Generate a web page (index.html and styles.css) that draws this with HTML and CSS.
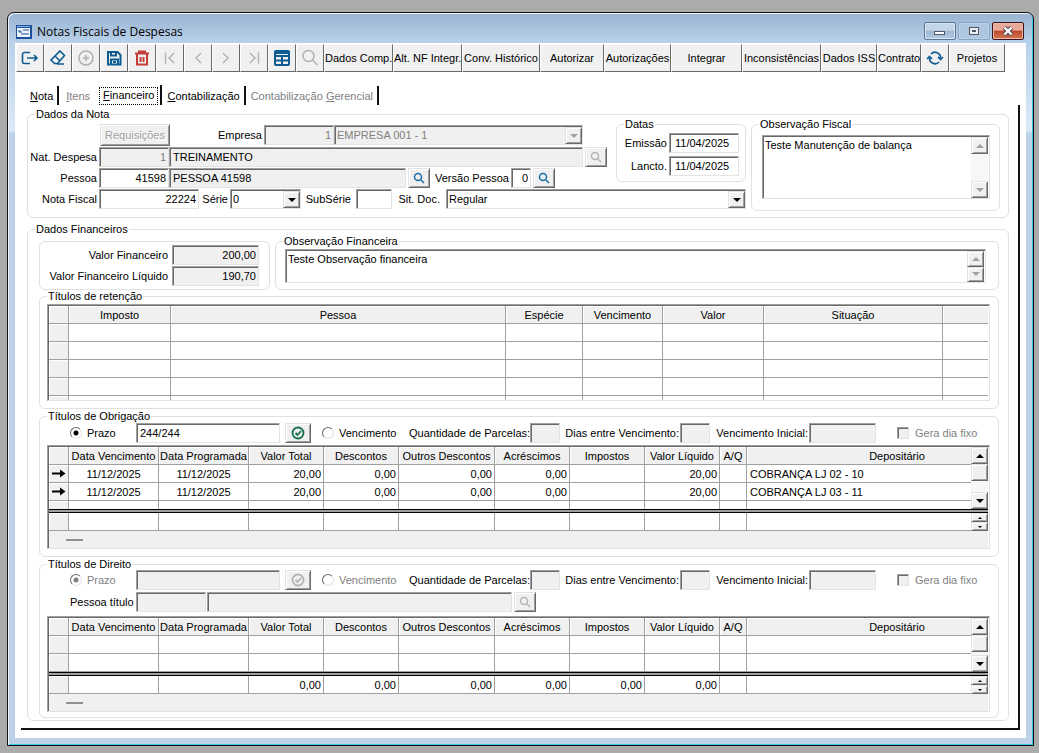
FILE: index.html
```html
<!DOCTYPE html>
<html lang="pt-BR">
<head>
  <meta charset="UTF-8">
  <meta name="viewport" content="width=device-width, initial-scale=1.0">
  <title>Notas Fiscais de Despesas</title>
  <link rel="stylesheet" href="styles.css">
</head>
<body>
  <div class="window">
    <header class="titlebar">
      <svg class="logo" width="16" height="14" viewBox="0 0 16 14">
        <rect width="16" height="14" fill="#1d4f9c"/>
        <rect x="1" y="3" width="13" height="9" fill="#eef5fc"/>
        <path d="M2 6h3M7 5h6M3 7h3M5 9h8" stroke="#1d4f9c" fill="none"/>
        <path d="M1 1.5h13" stroke="#7fb2e6"/>
      </svg>
      <h1>Notas Fiscais de Despesas</h1>
      <div class="win-buttons">
        <button type="button" class="win-btn" aria-label="Minimizar">
          <svg width="12" height="10" viewBox="0 0 12 10"><rect x="0.5" y="5.5" width="10" height="3" fill="#fff" stroke="#535666"/></svg>
        </button>
        <button type="button" class="win-btn faded" aria-label="Maximizar">
          <svg width="12" height="10" viewBox="0 0 12 10"><rect x="1.5" y="1.5" width="9" height="7" fill="#e8eef6" stroke="#535666"/><rect x="4.5" y="4.5" width="3" height="1" fill="#fff" stroke="#535666"/></svg>
        </button>
        <button type="button" class="win-btn close" aria-label="Fechar">
          <svg width="12" height="10" viewBox="0 0 12 10"><path d="M2.5 1.5l7 7M9.5 1.5l-7 7" stroke="#4b4b5a" stroke-width="4.5"/><path d="M2.5 1.5l7 7M9.5 1.5l-7 7" stroke="#fff" stroke-width="2.4"/></svg>
        </button>
      </div>
    </header>

    <div class="toolbar">
      <button type="button" class="tool icon" aria-label="Sair">
        <svg viewBox="0 0 18 18"><path d="M9 3.5H3.500a2 2 0 0 0-2 2v7a2 2 0 0 0 2 2H9M6 9h10M13 6l3 3-3 3"/></svg>
      </button>
      <button type="button" class="tool icon" aria-label="Limpar">
        <svg viewBox="0 0 18 18"><path d="M11 2l4.500 4.500-7 8H5.500L2 11zM6 7l5 5M8 15h7"/></svg>
      </button>
      <button type="button" class="tool icon off" aria-label="Adicionar">
        <svg viewBox="0 0 18 18"><circle cx="9" cy="9" r="7"/><path d="M9 6v6M6 9h6"/></svg>
      </button>
      <button type="button" class="tool icon bold" aria-label="Salvar">
        <svg viewBox="0 0 18 18"><path d="M3 3h9.500L15.500 6v9.500H3zM6 3v3.500h5V3M6 15.500v-5h7v5M8 13h3"/></svg>
      </button>
      <button type="button" class="tool icon red bold" aria-label="Excluir">
        <svg viewBox="0 0 18 18"><path d="M2 4.500h14M6 4.500v-2h6v2M4 4.500v11h10v-11M7.500 8v5M10.500 8v5"/></svg>
      </button>
      <button type="button" class="tool icon off thin" aria-label="Primeiro">
        <svg viewBox="0 0 18 18"><path d="M4.500 3.500v11M13 4L8 9l5 5"/></svg>
      </button>
      <button type="button" class="tool icon off thin" aria-label="Anterior">
        <svg viewBox="0 0 18 18"><path d="M12 4L7 9l5 5"/></svg>
      </button>
      <button type="button" class="tool icon off thin" aria-label="Próximo">
        <svg viewBox="0 0 18 18"><path d="M6 4l5 5-5 5"/></svg>
      </button>
      <button type="button" class="tool icon off thin" aria-label="Último">
        <svg viewBox="0 0 18 18"><path d="M5 4l5 5-5 5M13.500 3.500v11"/></svg>
      </button>
      <button type="button" class="tool icon bold" aria-label="Grade">
        <svg viewBox="0 0 18 18"><rect x="2" y="2" width="14" height="14" rx="1"/><path d="M2 4h14M2 7h14M2 11.500h14M9 7v9"/></svg>
      </button>
      <button type="button" class="tool icon off thin" aria-label="Pesquisar">
        <svg viewBox="0 0 18 18"><circle cx="7.500" cy="7" r="5.500"/><path d="M11.500 11l5 5"/></svg>
      </button>
      <button type="button" class="tool w-69">Dados Comp.</button>
      <button type="button" class="tool w-69">Alt. NF Integr.</button>
      <button type="button" class="tool w-78">Conv. Histórico</button>
      <button type="button" class="tool w-64">Autorizar</button>
      <button type="button" class="tool w-67">Autorizações</button>
      <button type="button" class="tool w-71">Integrar</button>
      <button type="button" class="tool w-79">Inconsistências</button>
      <button type="button" class="tool w-56">Dados ISS</button>
      <button type="button" class="tool w-44">Contrato</button>
      <button type="button" class="tool icon" aria-label="Atualizar">
        <svg viewBox="0 0 18 18"><path d="M5 5a5.500 5.500 0 0 1 9.500 4M13 13a5.500 5.500 0 0 1-9.500-4M12 8l2.500 2.500L17 8M1 10l2.500-2.500L6 10"/></svg>
      </button>
      <button type="button" class="tool w-56">Projetos</button>
    </div>

    <div class="tabs" role="tablist">
      <button type="button" class="tab" role="tab"><u>N</u>ota</button>
      <button type="button" class="tab off plain" role="tab"><u>I</u>tens</button>
      <button type="button" class="tab active" role="tab" aria-selected="true"><span><u>F</u>inanceiro</span></button>
      <button type="button" class="tab" role="tab"><u>C</u>ontabilização</button>
      <button type="button" class="tab off" role="tab">Contabilização <u>G</u>erencial</button>
    </div>

    <main class="panel">
      <fieldset class="box nota">
        <legend>Dados da Nota</legend>
        <div class="nota-body">
          <div class="nota-form">
            <div class="nota-top">
              <div class="nota-rows">
                <div class="row row-empresa">
                  <button type="button" class="btn btn-req" disabled>Requisições</button>
                  <label class="lbl lbl-empresa" for="empresa">Empresa</label>
                  <input class="field num w-code off" id="empresa" value="1" disabled>
                  <div class="combo grow off">
                    <select aria-label="Nome da empresa" disabled><option>EMPRESA 001 - 1</option></select>
                    <span class="combo-arrow"></span>
                  </div>
                </div>
                <div class="row">
                  <label class="lbl lbl-first" for="natureza">Nat. Despesa</label>
                  <input class="field num w-code off" id="natureza" value="1" disabled>
                  <input class="field grow lock" aria-label="Natureza" value="TREINAMENTO" readonly>
                  <button type="button" class="btn btn-find off" aria-label="Pesquisar natureza" disabled>
                    <svg viewBox="0 0 12 12"><circle cx="5" cy="5" r="3.500"/><path d="M8 8l3 3"/></svg>
                  </button>
                </div>
                <div class="row">
                  <label class="lbl lbl-first" for="pessoa">Pessoa</label>
                  <input class="field num w-code" id="pessoa" value="41598">
                  <input class="field grow lock" aria-label="Nome da pessoa" value="PESSOA 41598" readonly>
                  <button type="button" class="btn btn-find" aria-label="Pesquisar pessoa">
                    <svg viewBox="0 0 12 12"><circle cx="5" cy="5" r="3.500"/><path d="M8 8l3 3"/></svg>
                  </button>
                  <label class="lbl lbl-versao" for="versao">Versão Pessoa</label>
                  <input class="field num w-versao" id="versao" value="0">
                  <button type="button" class="btn btn-find end-versao" aria-label="Pesquisar versão">
                    <svg viewBox="0 0 12 12"><circle cx="5" cy="5" r="3.500"/><path d="M8 8l3 3"/></svg>
                  </button>
                </div>
              </div>
              <fieldset class="box datas">
                <legend>Datas</legend>
                <div class="row">
                  <label class="lbl" for="emissao">Emissão</label>
                  <input class="field date" id="emissao" value="11/04/2025">
                </div>
                <div class="row">
                  <label class="lbl" for="lancto">Lancto.</label>
                  <input class="field date" id="lancto" value="11/04/2025">
                </div>
              </fieldset>
            </div>
            <div class="row">
              <label class="lbl lbl-first" for="nf">Nota Fiscal</label>
              <input class="field num w-nf" id="nf" value="22224">
              <label class="lbl lbl-serie" for="serie">Série</label>
              <div class="combo w-serie">
                <select id="serie"><option>0</option></select>
                <span class="combo-arrow"></span>
              </div>
              <label class="lbl lbl-sub" for="subserie">SubSérie</label>
              <input class="field w-sub" id="subserie">
              <label class="lbl lbl-sit" for="sitdoc">Sit. Doc.</label>
              <div class="combo grow">
                <select id="sitdoc"><option>Regular</option></select>
                <span class="combo-arrow"></span>
              </div>
            </div>
          </div>
          <fieldset class="box obs-fiscal">
            <legend>Observação Fiscal</legend>
            <div class="memo">
              <textarea aria-label="Observação Fiscal">Teste Manutenção de balança</textarea>
              <div class="scroll off">
                <button type="button" class="sbtn up" aria-label="Subir"></button>
                <button type="button" class="sbtn down" aria-label="Descer"></button>
              </div>
            </div>
          </fieldset>
        </div>
      </fieldset>

      <fieldset class="box financeiros">
        <legend>Dados Financeiros</legend>
        <div class="fin-top">
          <div class="box valores">
            <div class="row">
              <label class="lbl" for="valor">Valor Financeiro</label>
              <input class="field num lock" id="valor" value="200,00" readonly>
            </div>
            <div class="row">
              <label class="lbl" for="liquido">Valor Financeiro Líquido</label>
              <input class="field num lock" id="liquido" value="190,70" readonly>
            </div>
          </div>
          <fieldset class="box obs-fin">
            <legend>Observação Financeira</legend>
            <div class="memo">
              <textarea aria-label="Observação Financeira">Teste Observação financeira</textarea>
              <div class="scroll off">
                <button type="button" class="sbtn up" aria-label="Subir"></button>
                <button type="button" class="sbtn down" aria-label="Descer"></button>
              </div>
            </div>
          </fieldset>
        </div>

        <fieldset class="box titulos retencao">
          <legend>Títulos de retenção</legend>
          <div class="grid">
            <table>
              <colgroup>
                <col class="c-mark"><col class="c-imposto"><col><col class="c-especie"><col class="c-venc"><col class="c-valor"><col class="c-sit"><col class="c-rest">
              </colgroup>
              <thead>
                <tr><th></th><th>Imposto</th><th>Pessoa</th><th>Espécie</th><th>Vencimento</th><th>Valor</th><th>Situação</th><th></th></tr>
              </thead>
              <tbody>
                <tr><td></td><td></td><td></td><td></td><td></td><td></td><td></td><td></td></tr>
                <tr><td></td><td></td><td></td><td></td><td></td><td></td><td></td><td></td></tr>
                <tr><td></td><td></td><td></td><td></td><td></td><td></td><td></td><td></td></tr>
                <tr><td></td><td></td><td></td><td></td><td></td><td></td><td></td><td></td></tr>
                <tr class="cut"><td></td><td></td><td></td><td></td><td></td><td></td><td></td><td></td></tr>
              </tbody>
            </table>
          </div>
        </fieldset>

        <fieldset class="box titulos obrigacao">
          <legend>Títulos de Obrigação</legend>
          <div class="row opts">
            <label class="radio prazo"><input type="radio" name="obr" checked>Prazo</label>
            <input class="field w-prazo" aria-label="Prazo" value="244/244">
            <button type="button" class="btn btn-ok" aria-label="Confirmar prazo">
              <svg viewBox="0 0 14 14"><circle cx="7" cy="7" r="5.500"/><path d="M4.500 7l2 2 3.500-4"/></svg>
            </button>
            <label class="radio venc"><input type="radio" name="obr">Vencimento</label>
            <label class="lbl lbl-qtd" for="qtd1">Quantidade de Parcelas:</label>
            <input class="field w-30 off" id="qtd1" disabled>
            <label class="lbl lbl-dias" for="dias1">Dias entre Vencimento:</label>
            <input class="field w-30 off" id="dias1" disabled>
            <label class="lbl lbl-ini" for="ini1">Vencimento Inicial:</label>
            <input class="field w-67 off" id="ini1" disabled>
            <label class="check"><input type="checkbox" disabled>Gera dia fixo</label>
          </div>
          <div class="grid">
            <div class="grid-part">
              <table>
                <colgroup>
                  <col class="c-mark"><col class="c-data"><col class="c-data"><col class="c-75"><col class="c-75"><col class="c-outros"><col class="c-75"><col class="c-75"><col class="c-75"><col class="c-aq"><col>
                </colgroup>
                <thead>
                  <tr><th></th><th>Data Vencimento</th><th>Data Programada</th><th>Valor Total</th><th>Descontos</th><th>Outros Descontos</th><th>Acréscimos</th><th>Impostos</th><th>Valor Líquido</th><th>A/Q</th><th class="dep">Depositário</th></tr>
                </thead>
                <tbody>
                  <tr>
                    <td><svg class="arrow" width="14" height="9" viewBox="0 0 14 9"><path d="M0 4.500h11" stroke="#000" stroke-width="2"/><path d="M8 0.500l5.500 4-5.500 4z"/></svg></td>
                    <td class="mid">11/12/2025</td><td class="mid">11/12/2025</td><td>20,00</td><td>0,00</td><td>0,00</td><td>0,00</td><td></td><td>20,00</td><td></td><td class="txt">COBRANÇA LJ 02 - 10</td>
                  </tr>
                  <tr>
                    <td><svg class="arrow" width="14" height="9" viewBox="0 0 14 9"><path d="M0 4.500h11" stroke="#000" stroke-width="2"/><path d="M8 0.500l5.500 4-5.500 4z"/></svg></td>
                    <td class="mid">11/12/2025</td><td class="mid">11/12/2025</td><td>20,00</td><td>0,00</td><td>0,00</td><td>0,00</td><td></td><td>20,00</td><td></td><td class="txt">COBRANÇA LJ 03 - 11</td>
                  </tr>
                  <tr class="cut"><td></td><td></td><td></td><td></td><td></td><td></td><td></td><td></td><td></td><td></td><td></td></tr>
                </tbody>
              </table>
              <div class="scroll">
                <button type="button" class="sbtn up" aria-label="Subir"></button>
                <span class="thumb"></span>
                <button type="button" class="sbtn down" aria-label="Descer"></button>
              </div>
            </div>
            <div class="split"></div>
            <div class="grid-part">
              <table>
                <colgroup>
                  <col class="c-mark"><col class="c-data"><col class="c-data"><col class="c-75"><col class="c-75"><col class="c-outros"><col class="c-75"><col class="c-75"><col class="c-75"><col class="c-aq"><col>
                </colgroup>
                <tbody>
                  <tr><td></td><td></td><td></td><td></td><td></td><td></td><td></td><td></td><td></td><td></td><td></td></tr>
                </tbody>
              </table>
              <div class="scroll mini">
                <button type="button" class="sbtn up" aria-label="Subir"></button>
                <button type="button" class="sbtn down" aria-label="Descer"></button>
              </div>
            </div>
            <div class="grid-foot"><span class="dash"></span></div>
          </div>
        </fieldset>

        <fieldset class="box titulos direito">
          <legend>Títulos de Direito</legend>
          <div class="row opts">
            <label class="radio prazo off"><input type="radio" name="dir" checked disabled>Prazo</label>
            <input class="field w-prazo off" aria-label="Prazo" disabled>
            <button type="button" class="btn btn-ok off" aria-label="Confirmar prazo" disabled>
              <svg viewBox="0 0 14 14"><circle cx="7" cy="7" r="5.500"/><path d="M4.500 7l2 2 3.500-4"/></svg>
            </button>
            <label class="radio venc off"><input type="radio" name="dir" disabled>Vencimento</label>
            <label class="lbl lbl-qtd" for="qtd2">Quantidade de Parcelas:</label>
            <input class="field w-30 off" id="qtd2" disabled>
            <label class="lbl lbl-dias" for="dias2">Dias entre Vencimento:</label>
            <input class="field w-30 off" id="dias2" disabled>
            <label class="lbl lbl-ini" for="ini2">Vencimento Inicial:</label>
            <input class="field w-67 off" id="ini2" disabled>
            <label class="check"><input type="checkbox" disabled>Gera dia fixo</label>
          </div>
          <div class="row opts">
            <label class="lbl-titulo" for="ptitulo">Pessoa título</label>
            <input class="field w-code off" id="ptitulo" disabled>
            <input class="field w-titulo off" aria-label="Nome da pessoa do título" disabled>
            <button type="button" class="btn btn-find off" aria-label="Pesquisar pessoa do título" disabled>
              <svg viewBox="0 0 12 12"><circle cx="5" cy="5" r="3.500"/><path d="M8 8l3 3"/></svg>
            </button>
          </div>
          <div class="grid">
            <div class="grid-part">
              <table>
                <colgroup>
                  <col class="c-mark"><col class="c-data"><col class="c-data"><col class="c-75"><col class="c-75"><col class="c-outros"><col class="c-75"><col class="c-75"><col class="c-75"><col class="c-aq"><col>
                </colgroup>
                <thead>
                  <tr><th></th><th>Data Vencimento</th><th>Data Programada</th><th>Valor Total</th><th>Descontos</th><th>Outros Descontos</th><th>Acréscimos</th><th>Impostos</th><th>Valor Líquido</th><th>A/Q</th><th class="dep">Depositário</th></tr>
                </thead>
                <tbody>
                  <tr><td></td><td></td><td></td><td></td><td></td><td></td><td></td><td></td><td></td><td></td><td></td></tr>
                  <tr><td></td><td></td><td></td><td></td><td></td><td></td><td></td><td></td><td></td><td></td><td></td></tr>
                </tbody>
              </table>
              <div class="scroll">
                <button type="button" class="sbtn up" aria-label="Subir"></button>
                <span class="thumb"></span>
                <button type="button" class="sbtn down" aria-label="Descer"></button>
              </div>
            </div>
            <div class="split"></div>
            <div class="grid-part">
              <table>
                <colgroup>
                  <col class="c-mark"><col class="c-data"><col class="c-data"><col class="c-75"><col class="c-75"><col class="c-outros"><col class="c-75"><col class="c-75"><col class="c-75"><col class="c-aq"><col>
                </colgroup>
                <tbody>
                  <tr><td></td><td></td><td></td><td>0,00</td><td>0,00</td><td>0,00</td><td>0,00</td><td>0,00</td><td>0,00</td><td></td><td></td></tr>
                </tbody>
              </table>
              <div class="scroll mini">
                <button type="button" class="sbtn up" aria-label="Subir"></button>
                <button type="button" class="sbtn down" aria-label="Descer"></button>
              </div>
            </div>
            <div class="grid-foot"><span class="dash"></span></div>
          </div>
        </fieldset>
      </fieldset>
    </main>
  </div>
</body>
</html>
```
FILE: styles.css
```css
* {
  box-sizing: border-box;
}

body {
  margin: 0;
  padding: 12px 5px 6px 7px;
  background: #ababab;
  color: #000;
  font: 11px/14px "Liberation Sans", Arial, sans-serif;
}

button,
input,
select,
textarea {
  margin: 0;
  font: inherit;
  color: inherit;
  border-radius: 0;
  outline: none;
}

button {
  padding: 0;
  white-space: nowrap;
}

svg {
  display: block;
}

/* janela */
.window {
  border: 1px solid #111;
  border-radius: 7px 7px 0 0;
  background: linear-gradient(#99b4d1, #b9d1ea 30px, #dce9f6 118px, #bdd1e9 120px);
  box-shadow: inset 1px 1px #eef6fc, inset -1px -1px #35c8e8;
  padding: 1px 7px 7px;
}

.titlebar {
  display: flex;
  align-items: center;
  height: 29px;
  padding: 0 2px 0 1px;
}

.titlebar h1 {
  flex: 1;
  margin: 0 0 0 5px;
  font: 12px/16px "Open Sans", "Noto Sans", sans-serif;
  padding-top: 7px;
}

.titlebar .logo {
  margin-top: 6px;
}

.win-buttons {
  display: flex;
  gap: 2px;
  padding-top: 4px;
}

.win-btn {
  display: flex;
  align-items: center;
  justify-content: center;
  width: 32px;
  height: 18px;
  border: 1px solid #5d7590;
  border-radius: 2px;
  background: linear-gradient(#c3d5e9 45%, #9db7d3 50%, #b4cbe4);
  box-shadow: inset 0 0 0 1px #d9e6f4;
}

.win-btn.faded {
  border-color: #8ba4c0;
  background: #aec6e0;
  box-shadow: inset 0 0 0 1px #bdd2e9;
}

.win-btn.close {
  border-color: #43141a;
  background: linear-gradient(#e9a99b 45%, #c0452c 50%, #cf7a55);
  box-shadow: inset 0 0 0 1px #eab7a8;
}

/* barra de ferramentas */
.toolbar {
  display: flex;
  padding: 1px 0 0 1px;
  background: #fff;
}

.tool {
  height: 28px;
  border: 1px solid #fff;
  border-right-color: #696969;
  border-bottom-color: #696969;
  background: #f0f0f0;
}

.tool.icon {
  display: flex;
  align-items: center;
  justify-content: center;
  width: 28px;
}

.tool svg {
  width: 18px;
  height: 18px;
  fill: none;
  stroke: #0d5c91;
  stroke-width: 1.6;
}

.tool.off svg {
  stroke: #b0b0b0;
}

.tool.thin svg {
  stroke-width: 1.4;
}

.tool.bold svg {
  stroke-width: 2;
}

.tool.red svg {
  stroke: #c43c34;
}

.w-44 { width: 44px; }
.w-56 { width: 56px; }
.w-64 { width: 64px; }
.w-67 { width: 67px; }
.w-69 { width: 69px; }
.w-71 { width: 71px; }
.w-78 { width: 78px; }
.w-79 { width: 79px; }

/* abas */
.tabs {
  display: flex;
  align-items: center;
  height: 33px;
  padding: 14px 0 0 10px;
  background: #fff;
}

.tab {
  height: 19px;
  padding: 0 4px 0 5px;
  border: none;
  border-right: 2px solid #111;
  background: none;
}

.tab.plain {
  border-right: none;
  padding: 0 7px;
}

.tab.off {
  color: #808080;
}

.tab.active {
  height: 22px;
  padding: 0 2px;
}

.tab.active span {
  display: block;
  padding: 0 3px 2px;
  border: 1px dotted #000;
}

/* painel */
.panel {
  position: relative;
  padding: 2px 9px 7px 6px;
  border: 0 solid #fff;
  border-width: 0 8px 10px 6px;
  background: #fff;
}

.panel::after {
  content: "";
  position: absolute;
  inset: 0 -2px -2px 0;
  border: solid #111;
  border-width: 0 2px 2px 0;
  pointer-events: none;
}

.box {
  min-width: 0;
  margin: 0;
  padding: 0;
  border: 1px solid #e0e0e0;
  border-radius: 6px;
}

legend {
  height: 14px;
  margin-left: 7px;
  padding: 0 1px;
  line-height: 14px;
}

.row {
  display: flex;
  align-items: center;
}

.lbl {
  flex: none;
  text-align: right;
  white-space: nowrap;
  padding-right: 2px;
}

.grow {
  flex: 1;
  min-width: 0;
}

.field {
  height: 20px;
  padding: 0 2px 1px 3px;
  border: 1px solid #a0a0a0;
  border-right-color: #e3e3e3;
  border-bottom-color: #e3e3e3;
  background: #fff;
  box-shadow: inset 1px 1px #696969;
}

.field.num {
  text-align: right;
}

.field.off,
.field.lock {
  background: #f0f0f0;
}

.field.off {
  color: #808080;
}

.w-code {
  width: 70px;
}

.combo {
  position: relative;
  height: 20px;
}

.combo select {
  display: block;
  width: 100%;
  height: 20px;
  padding: 0 20px 1px 2px;
  border: 1px solid #a0a0a0;
  border-right-color: #e3e3e3;
  border-bottom-color: #e3e3e3;
  background: #fff;
  box-shadow: inset 1px 1px #696969;
  appearance: none;
}

.combo.off select {
  background: #f0f0f0;
  color: #808080;
  opacity: 1;
}

.combo-arrow {
  position: absolute;
  top: 2px;
  right: 1px;
  width: 17px;
  height: 17px;
  pointer-events: none;
}

.combo-arrow,
.btn,
.sbtn,
.thumb {
  border: 1px solid #e3e3e3;
  border-right-color: #696969;
  border-bottom-color: #696969;
  background: #f0f0f0;
  box-shadow: inset 1px 1px #fff, inset -1px -1px #a0a0a0;
}

.combo-arrow,
.sbtn {
  display: flex;
  align-items: center;
  justify-content: center;
}

.combo-arrow::before,
.sbtn::before {
  content: "";
  border: 4px solid transparent;
  border-bottom-width: 0;
  border-top-color: #000;
}

.sbtn.up::before {
  border-width: 0 4px 4px;
  border-top-color: transparent;
  border-bottom-color: #000;
}

.combo.off .combo-arrow::before,
.scroll.off .sbtn.down::before {
  border-top-color: #a0a0a0;
}

.scroll.off .sbtn.up::before {
  border-bottom-color: #a0a0a0;
}

.btn {
  display: flex;
  align-items: center;
  justify-content: center;
  height: 20px;
}

.btn svg {
  fill: none;
  stroke: #1a6ca8;
  stroke-width: 1.5;
}

.btn.off svg {
  stroke: #b4b4b4;
}

.btn-find {
  width: 22px;
  margin-left: 2px;
}

.btn-find svg {
  width: 12px;
  height: 12px;
}

.btn-ok {
  width: 26px;
  margin-left: 5px;
}

.btn-ok svg {
  width: 14px;
  height: 14px;
  stroke: #14714c;
  stroke-width: 1.8;
}

/* dados da nota */
.nota-body {
  display: flex;
  padding: 3px 8px 6px 0;
}

.nota-form {
  flex: 1;
  min-width: 0;
}

.nota-top {
  display: flex;
  align-items: flex-start;
}

.nota-rows {
  flex: 1;
  min-width: 0;
  display: flex;
  flex-direction: column;
  gap: 1px;
  margin-bottom: 1px;
}

.row-empresa {
  padding: 0 24px 0 72px;
}

.btn-req {
  width: 70px;
  height: 22px;
  color: #a0a0a0;
  text-shadow: 1px 1px #fff;
}

.lbl-first {
  width: 71px;
}

.lbl-empresa {
  width: 94px;
}

.lbl-versao {
  width: 81px;
}

.w-versao {
  width: 20px;
}

.end-versao {
  margin-right: 52px;
}

.w-nf {
  width: 100px;
}

.lbl-serie {
  width: 31px;
}

.w-serie {
  width: 71px;
}

.lbl-sub {
  width: 55px;
  padding-right: 5px;
}

.w-sub {
  width: 36px;
}

.lbl-sit {
  width: 54px;
  padding-right: 6px;
}

.datas {
  width: 130px;
  height: 65px;
  margin: -7px 0 0 9px;
}

.datas .row {
  justify-content: flex-end;
  padding: 2px 6px 1px 0;
}

.date {
  width: 70px;
  padding-left: 5px;
}

.obs-fiscal {
  width: 249px;
  height: 94px;
  margin: -7px 0 0 5px;
}

.obs-fiscal .memo {
  height: 64px;
  margin: 4px 9px 0 10px;
}

.memo {
  display: flex;
  border: 1px solid #a0a0a0;
  border-right-color: #e3e3e3;
  border-bottom-color: #e3e3e3;
  box-shadow: inset 1px 1px #696969;
  padding: 1px 1px 0 1px;
}

.memo textarea {
  flex: 1;
  min-width: 0;
  padding: 1px;
  border: none;
  background: none;
  resize: none;
  overflow: hidden;
}

.scroll {
  flex: none;
  display: flex;
  flex-direction: column;
  width: 17px;
  background: #f7f7f7;
}

.scroll .sbtn,
.thumb {
  width: 17px;
  height: 17px;
}

.scroll .down {
  margin-top: auto;
}

/* dados financeiros */
.financeiros {
  margin-top: 4px;
  padding: 1px 9px 2px 11px;
}

.financeiros > legend {
  margin-left: -4px;
}

.fin-top {
  display: flex;
  align-items: flex-start;
}

.valores {
  width: 231px;
  height: 49px;
  margin-top: 4px;
  padding: 3px 10px 0 0;
}

.valores .row {
  justify-content: flex-end;
  padding-bottom: 1px;
}

.valores .lbl {
  padding-right: 4px;
}

.valores .field {
  width: 87px;
}

.obs-fin {
  flex: 1;
  height: 56px;
  margin: -3px 0 0 5px;
}

.obs-fin .memo {
  height: 34px;
  margin: 1px 12px 0 9px;
}

.obs-fin .sbtn {
  height: 16px;
}

.titulos {
  padding: 1px 8px 7px 7px;
}

.titulos > legend {
  margin-left: 0;
}

.retencao {
  margin-top: -1px;
}

.obrigacao {
  padding-top: 0;
}

.direito {
  padding-bottom: 5px;
}

.opts {
  height: 20px;
  margin-bottom: 2px;
  padding-left: 23px;
}

.direito .opts {
  margin-top: -2px;
  margin-bottom: 4px;
}

.radio,
.check {
  display: flex;
  align-items: center;
  flex: none;
  white-space: nowrap;
}

.radio input {
  width: 12px;
  height: 12px;
  margin-right: 5px;
  border: 1px solid #e3e3e3;
  border-top-color: #696969;
  border-left-color: #696969;
  border-radius: 50%;
  background: #fff;
  appearance: none;
}

.radio input:checked {
  background: radial-gradient(#000 2px, #fff 3px);
}

.radio.off input:checked {
  background: radial-gradient(#808080 2px, #fff 3px);
}

.radio.off,
.check {
  color: #808080;
}

.prazo {
  width: 66px;
}

.venc {
  width: 87px;
  margin-left: 11px;
}

.w-prazo {
  width: 144px;
}

.opts .lbl {
  padding-right: 1px;
}

.lbl-qtd {
  width: 121px;
}

.lbl-dias {
  width: 120px;
}

.lbl-ini {
  width: 99px;
}

.w-30 {
  width: 30px;
}

.opts .w-67 {
  width: 67px;
}

.check {
  margin-left: 21px;
}

.check input {
  width: 12px;
  height: 12px;
  margin-right: 6px;
  border: 1px solid #a0a0a0;
  border-right-color: #e3e3e3;
  border-bottom-color: #e3e3e3;
  background: #f0f0f0;
  box-shadow: inset 1px 1px #696969;
  appearance: none;
}

.lbl-titulo {
  width: 66px;
}

.w-titulo {
  width: 305px;
  margin-left: 1px;
}

/* grades */
.grid {
  border: 1px solid #a0a0a0;
  border-right-color: #e3e3e3;
  border-bottom-color: #e3e3e3;
  padding: 1px 1px 0 1px;
  box-shadow: inset 1px 1px #696969;
  overflow: hidden;
}

.grid table {
  flex: 1;
  width: 100%;
  table-layout: fixed;
  border-collapse: separate;
  border-spacing: 0;
}

.grid-part {
  display: flex;
}

.grid th,
.grid td {
  height: 18px;
  padding: 0 2px;
  border: solid #a0a0a0;
  border-width: 0 1px 1px 0;
  font-weight: normal;
  line-height: 14px;
  text-align: right;
  white-space: nowrap;
}

.grid th {
  padding: 0;
  background: #f0f0f0;
  box-shadow: inset 1px 1px #fff;
  text-align: center;
}

.grid td:first-child {
  background: #f0f0f0;
  box-shadow: inset 1px 1px #fff;
}

.grid tr > :last-child {
  border-right: none;
}

.grid .mid {
  text-align: center;
}

.grid .txt {
  padding-left: 3px;
  text-align: left;
}

.grid .dep {
  padding-left: 76px;
}

.grid .cut td {
  height: 8px;
  border-bottom: none;
}

.retencao .cut td {
  height: 4px;
}

.c-mark { width: 20px; }
.c-imposto { width: 102px; }
.c-especie { width: 77px; }
.c-venc { width: 80px; }
.c-valor { width: 101px; }
.c-sit { width: 179px; }
.c-rest { width: 45px; }
.c-data { width: 90px; }
.c-75 { width: 75px; }
.c-outros { width: 96px; }
.c-aq { width: 27px; }

.arrow {
  margin-left: 1px;
}

.split {
  height: 4px;
  border: solid #000;
  border-width: 1px 0;
  background: #a0a0a0;
}

.scroll.mini .sbtn {
  height: 9px;
}

.scroll.mini .sbtn::before {
  border-width: 2px 2px 0;
}

.scroll.mini .sbtn.up::before {
  border-width: 0 2px 2px;
}

.grid-foot {
  height: 17px;
  padding: 8px 17px;
  background: #f0f0f0;
}

.dash {
  display: block;
  width: 17px;
  height: 2px;
  background: #909090;
}
```
